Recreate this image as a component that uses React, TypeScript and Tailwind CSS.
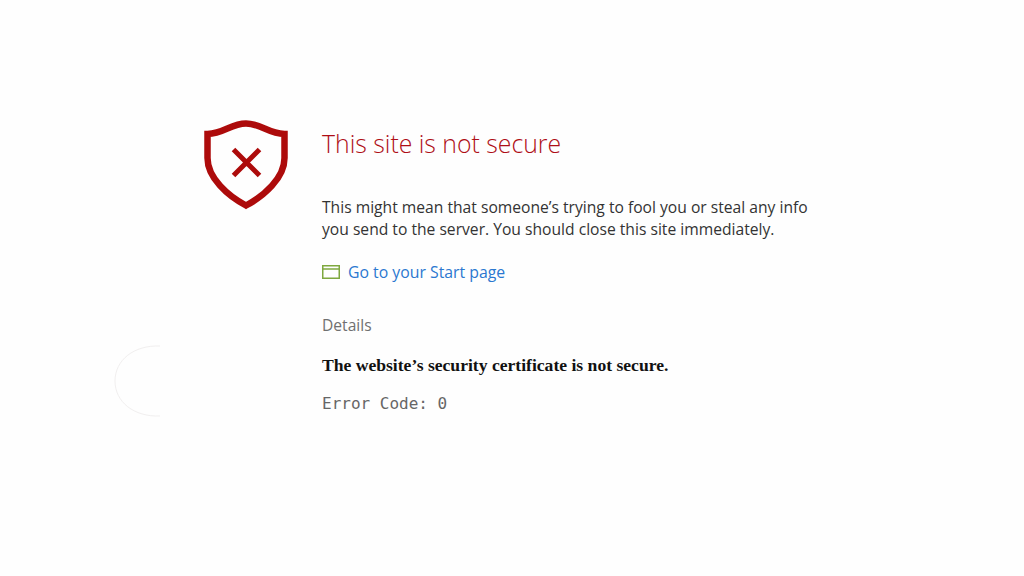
export default function App() {
  return (
    <div className="relative flex h-[576px] w-[1024px] overflow-hidden bg-[#fefefe] pl-[204px] pt-[120px]">
      {/* Faint loading ring left over on the page */}
      <svg className="absolute left-[112px] top-[343px]" width="52" height="76" viewBox="0 0 52 76" fill="none">
        <path d="M48 3 C 22 2 3 17 3 38 C 3 59 22 74 48 73" stroke="#f1efef" strokeWidth="1" />
      </svg>

      <div className="w-[118px] shrink-0">
        <svg width="84" height="90" viewBox="0 0 84 90" fill="none">
          <path
            d="M3.5 14 C 20 13.5 27 3.5 42 3.5 C 57 3.5 64 13.5 80.5 14 L 80.5 38 C 80.5 58 60 76 42 85.5 C 24 76 3.5 58 3.5 38 Z"
            stroke="#ad0b0b"
            strokeWidth="6.5"
            strokeLinejoin="miter"
          />
          <path d="M29.5 29.5 L 55.5 55.5 M55.5 29.5 L 29.5 55.5" stroke="#ad0b0b" strokeWidth="5" />
        </svg>
      </div>

      <div className="flex flex-col font-['Open_Sans',sans-serif]">
        <h1 className="mt-[3px] text-[24.8px] font-light leading-[40px] text-[#ae0e16]">This site is not secure</h1>
        <p className="mt-[33px] text-[15.65px] leading-[22px] text-[#333333]">
          This might mean that someone’s trying to fool you or steal any info
          <br />
          you send to the server. You should close this site immediately.
        </p>
        <div className="mt-[21px] flex h-[22px] items-center gap-[8px]">
          <svg width="18" height="14" viewBox="0 0 18 14" fill="none">
            <rect x="0.75" y="0.75" width="16.5" height="12.5" stroke="#7fa83f" strokeWidth="1.5" />
            <path d="M1 4 H17" stroke="#7fa83f" strokeWidth="1.5" />
          </svg>
          <a className="text-[15.8px] leading-[22px] text-[#2b78d0]">Go to your Start page</a>
        </div>
        <div className="mt-[31px] text-[15.6px] leading-[22px] text-[#707070]">Details</div>
        <div className="mt-[18px] font-['Liberation_Serif',serif] text-[17.6px] font-bold leading-[22px] text-[#111111]">
          The website’s security certificate is not secure.
        </div>
        <div className="mt-[17px] font-['DejaVu_Sans_Mono',monospace] text-[16px] leading-[22px] text-[#666666]">
          Error Code: 0
        </div>
      </div>
    </div>
  );
}
